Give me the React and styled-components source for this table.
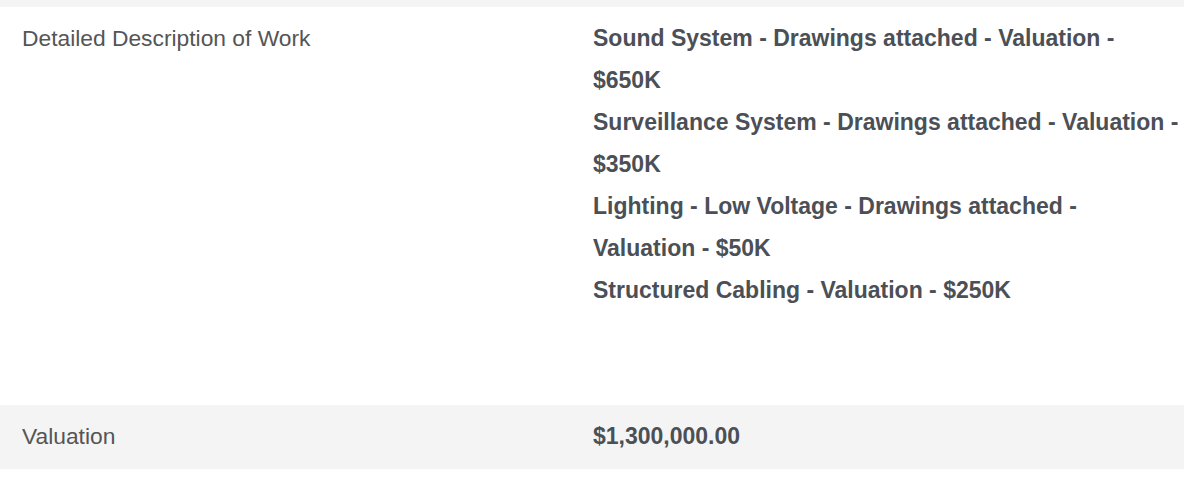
import styled, { createGlobalStyle } from "styled-components";

const GlobalStyle = createGlobalStyle`
  body {
    margin: 0;
    background: #ffffff;
    font-family: "Liberation Sans", Arial, sans-serif;
  }
`;

const Table = styled.div`
  width: 1184px;
  display: flex;
  flex-direction: column;
`;

const Row = styled.div`
  display: grid;
  grid-template-columns: 593px 1fr;
  background: ${(p) => (p.$shaded ? "#f4f4f4" : "#ffffff")};
  padding: 10px 0 ${(p) => p.$bottom || 12}px;
`;

const Strip = styled.div`
  height: 7px;
  background: #f4f4f4;
`;

const Label = styled.div`
  padding-left: 22px;
  font-size: 22.8px;
  line-height: 42px;
  color: #555555;
`;

const Value = styled.div`
  font-size: 23px;
  line-height: 42px;
  font-weight: bold;
  color: #4b4f56;
`;

const Line = styled.div``;

const items = [
  "Sound System - Drawings attached - Valuation - $650K",
  "Surveillance System - Drawings attached - Valuation - $350K",
  "Lighting - Low Voltage - Drawings attached - Valuation - $50K",
  "Structured Cabling - Valuation - $250K",
];

export default function App() {
  return (
    <>
      <GlobalStyle />
      <Table>
        <Strip />
        <Row $bottom={94}>
          <Label>Detailed Description of Work</Label>
          <Value>
            {items.map((t) => (
              <Line key={t}>{t}</Line>
            ))}
          </Value>
        </Row>
        <Row $shaded>
          <Label>Valuation</Label>
          <Value>$1,300,000.00</Value>
        </Row>
      </Table>
    </>
  );
}
